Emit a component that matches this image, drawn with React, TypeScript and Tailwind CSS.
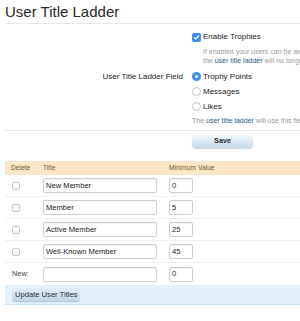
import React from 'react';

// User title ladder options + editable ladder table

const LADDER = [
  { title: 'New Member', min: '0' },
  { title: 'Member', min: '5' },
  { title: 'Active Member', min: '25' },
  { title: 'Well-Known Member', min: '45' },
];

const FONT = { fontFamily: '"Liberation Sans", Arial, sans-serif' };

function Checkbox({ checked = false }: { checked?: boolean }) {
  if (checked) {
    return (
      <span className="w-[9px] h-[9px] rounded-[2px] bg-[#3d8ee8] flex items-center justify-center shrink-0">
        <svg width="7" height="7" viewBox="0 0 8 8">
          <path d="M1.5 4.2 L3.2 5.8 L6.5 2" stroke="white" strokeWidth="1.4" fill="none" strokeLinecap="round" strokeLinejoin="round" />
        </svg>
      </span>
    );
  }
  return (
    <span className="w-[8px] h-[8px] rounded-[2px] border border-[#c8c8c8] bg-gradient-to-b from-white to-[#f2f2f2] shrink-0" />
  );
}

function Radio({ checked = false }: { checked?: boolean }) {
  if (checked) {
    return (
      <span className="w-[9px] h-[9px] rounded-full bg-[#3d8ee8] flex items-center justify-center shrink-0">
        <span className="w-[3px] h-[3px] rounded-full bg-white" />
      </span>
    );
  }
  return <span className="w-[9px] h-[9px] rounded-full border border-[#c4c4c4] bg-white shrink-0" />;
}

function TextBox({ value, width }: { value: string; width: string }) {
  return (
    <div
      className={`${width} h-[15px] border border-[#cfcfcf] rounded-[2px] bg-white shadow-[inset_0_1px_1px_rgba(0,0,0,0.06)] pl-[2px] flex items-center text-[7.6px] text-[#222]`}
    >
      {value}
    </div>
  );
}

export default function App() {
  return (
    <div className="w-[300px] h-[321px] overflow-hidden bg-white" style={FONT}>
      <div className="w-[640px] pl-[5px]">
        {/* 标题 */}
        <h1 className="pt-[3px] pb-[2px] leading-[18px] text-[15px] text-[#2a2a2a] border-b border-[#e8e8e8]">
          User Title Ladder
        </h1>

        {/* 选项 */}
        <div className="grid grid-cols-[178px_1fr] gap-x-[9px] mt-[7px]">
          <div />
          <div>
            <div className="flex items-center gap-[1px] h-[12px] text-[8px] text-[#222]">
              <Checkbox checked />
              <span className="pl-[1px]">Enable Trophies</span>
            </div>
            <div className="mt-[4px] pl-[11px] text-[7px] leading-[9px] text-[#9a9a9a] whitespace-nowrap">
              <div>If enabled your users can be awarded trophies for reaching certain milestones.</div>
              <div>
                the <span className="text-[#2b5d8a]">user title ladder</span> will no longer use trophy points.
              </div>
            </div>
          </div>

          <div className="mt-[4px] h-[15px] flex items-center justify-end text-[8px] text-[#222]">
            User Title Ladder Field
          </div>
          <div className="mt-[4px]">
            {['Trophy Points', 'Messages', 'Likes'].map((label, i) => (
              <div key={label} className="flex items-center gap-[1px] h-[15px] text-[8px] text-[#222]">
                <Radio checked={i === 0} />
                <span className="pl-[1px]">{label}</span>
              </div>
            ))}
            <div className="mt-[2px] text-[7px] leading-[9px] text-[#9a9a9a] whitespace-nowrap">
              The <span className="text-[#2b5d8a]">user title ladder</span> will use this field to determine titles.
            </div>
          </div>
        </div>

        <div className="mt-[5px] border-t border-[#e3e8ec]" />

        <div className="grid grid-cols-[178px_1fr] gap-x-[9px] mt-[4px]">
          <div />
          <div className="w-[61px] h-[13px] rounded-[4px] bg-gradient-to-b from-[#f3f8fc] to-[#c6d9ea] shadow-[0_1px_1px_rgba(0,0,0,0.18)] flex items-center justify-center text-[7.2px] font-bold text-[#2a2a2a]">
            Save
          </div>
        </div>

        {/* 表格 */}
        <div className="mt-[13px]">
          <div className="h-[14px] bg-[#fbe6c7] flex items-center text-[6.7px] text-[#7a5a30]">
            <span className="w-[38px] pl-[6px]">Delete</span>
            <span className="w-[126px]">Title</span>
            <span>Minimum Value</span>
          </div>

          {LADDER.map((row) => (
            <div key={row.title} className="h-[22px] flex items-center border-b border-[#f0f0f0]">
              <span className="w-[38px] pl-[7px] flex">
                <Checkbox />
              </span>
              <span className="w-[126px]">
                <TextBox value={row.title} width="w-[114px]" />
              </span>
              <TextBox value={row.min} width="w-[24px]" />
            </div>
          ))}

          <div className="h-[22px] flex items-center">
            <span className="w-[38px] pl-[7px] text-[7.4px] text-[#444]">New:</span>
            <span className="w-[126px]">
              <TextBox value="" width="w-[114px]" />
            </span>
            <TextBox value="0" width="w-[24px]" />
          </div>

          <div className="h-[20px] bg-[#e3f1fc] border-b border-[#cfe2f1] flex items-center pl-[7px]">
            <div className="h-[13px] px-[3px] rounded-[3px] bg-gradient-to-b from-[#e4eef6] to-[#c3d5e5] shadow-[0_1px_1px_rgba(0,0,0,0.2)] flex items-center text-[7.6px] text-[#2a3440]">
              Update User Titles
            </div>
          </div>
        </div>
      </div>
    </div>
  );
}
